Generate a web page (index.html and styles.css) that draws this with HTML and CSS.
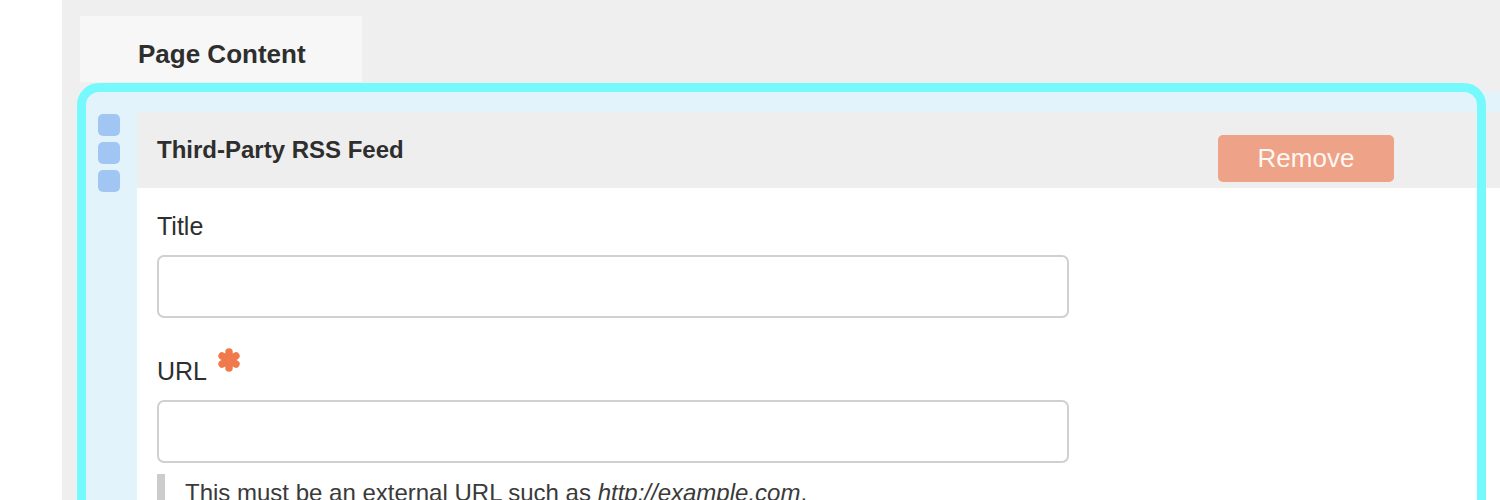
FILE: index.html
```html
<!DOCTYPE html>
<html lang="en">
<head>
<meta charset="utf-8">
<title>Page Content</title>
<link rel="stylesheet" href="styles.css">
</head>
<body>
<div class="page">
  <div class="tab">Page Content</div>
  <div class="item">
    <div class="outline"></div>
    <div class="handle">
      <span class="dot"></span>
      <span class="dot"></span>
      <span class="dot"></span>
    </div>
    <div class="panel">
      <div class="panel-header">
        <h2 class="panel-title">Third-Party RSS Feed</h2>
        <button class="btn-remove" type="button">Remove</button>
      </div>
      <div class="panel-body">
        <label class="field-label">Title</label>
        <input class="field-input" type="text">
        <label class="field-label field-label-gap">URL<svg class="required" viewBox="0 0 24 24" width="24" height="24" aria-hidden="true"><g stroke="#f07a4c" stroke-width="7.5" stroke-linecap="round"><line x1="12" y1="4" x2="12" y2="20"/><line x1="5.1" y1="8" x2="18.9" y2="16"/><line x1="5.1" y1="16" x2="18.9" y2="8"/></g></svg></label>
        <input class="field-input" type="text">
        <p class="help">This must be an external URL such as <em>http://example.com</em>.</p>
      </div>
    </div>
  </div>
</div>
</body>
</html>
```

FILE: styles.css
```css
html, body {
  margin: 0;
  padding: 0;
  background: #ffffff;
  font-family: "Liberation Sans", Arial, sans-serif;
  color: #2e2e2e;
}

.page {
  margin-left: 62px;
  height: 500px;
  overflow: hidden;
  background: #efefef;
  padding-left: 24px;
  padding-top: 16px;
  box-sizing: border-box;
}

.tab {
  margin-left: -6px;
  width: 224px;
  height: 66px;
  padding-left: 58px;
  background: #f7f7f7;
  font-size: 26px;
  font-weight: bold;
  line-height: 76px;
  overflow: hidden;
  box-sizing: content-box;
}

.item {
  position: relative;
  margin-top: 10px;
  display: flex;
  background: #e3f3fc;
  padding-top: 20px;
  min-height: 600px;
  border-top-left-radius: 13px;
}

.outline {
  position: absolute;
  left: -9px;
  top: -9px;
  width: 1409px;
  height: 700px;
  border: 9px solid #76f9fc;
  border-radius: 22px;
  box-sizing: border-box;
  pointer-events: none;
  z-index: 2;
}

.handle {
  width: 51px;
  flex: 0 0 51px;
  padding-left: 12px;
  padding-top: 2px;
  box-sizing: border-box;
  display: flex;
  flex-direction: column;
  gap: 6px;
}

.dot {
  display: block;
  width: 22px;
  height: 22px;
  border-radius: 5px;
  background: #a2c6f4;
}

.panel {
  flex: 1;
  background: #ffffff;
}

.panel-header {
  display: flex;
  align-items: flex-start;
  height: 76px;
  background: #eeeeee;
  padding-left: 20px;
}

.panel-title {
  margin: 0;
  font-size: 24px;
  font-weight: bold;
  line-height: 76px;
  color: #2e2e2e;
}

.btn-remove {
  margin-left: auto;
  margin-right: 106px;
  margin-top: 23px;
  width: 176px;
  height: 47px;
  border: none;
  border-radius: 5px;
  background: #eea287;
  color: #fff7f2;
  font-family: "Liberation Sans", Arial, sans-serif;
  font-size: 26px;
  padding: 0;
}

.panel-body {
  padding: 23px 0 0 20px;
}

.field-label {
  display: block;
  height: 30px;
  font-size: 25px;
  line-height: 30px;
  color: #2e2e2e;
}

.field-label-gap {
  margin-top: 38px;
}

.required {
  display: inline-block;
  width: 24px;
  height: 24px;
  margin-left: 10px;
  vertical-align: top;
  margin-top: -8px;
}

.field-input {
  display: block;
  margin-top: 14px;
  width: 912px;
  height: 63px;
  box-sizing: border-box;
  border: 2px solid #d0d0d0;
  border-radius: 7px;
  background: #ffffff;
  font-size: 22px;
  padding: 0 12px;
}

.help {
  margin: 11px 0 0 0;
  border-left: 8px solid #cccccc;
  padding-left: 20px;
  padding-top: 4px;
  font-size: 24px;
  line-height: 30px;
  color: #3a3a3a;
}
```
